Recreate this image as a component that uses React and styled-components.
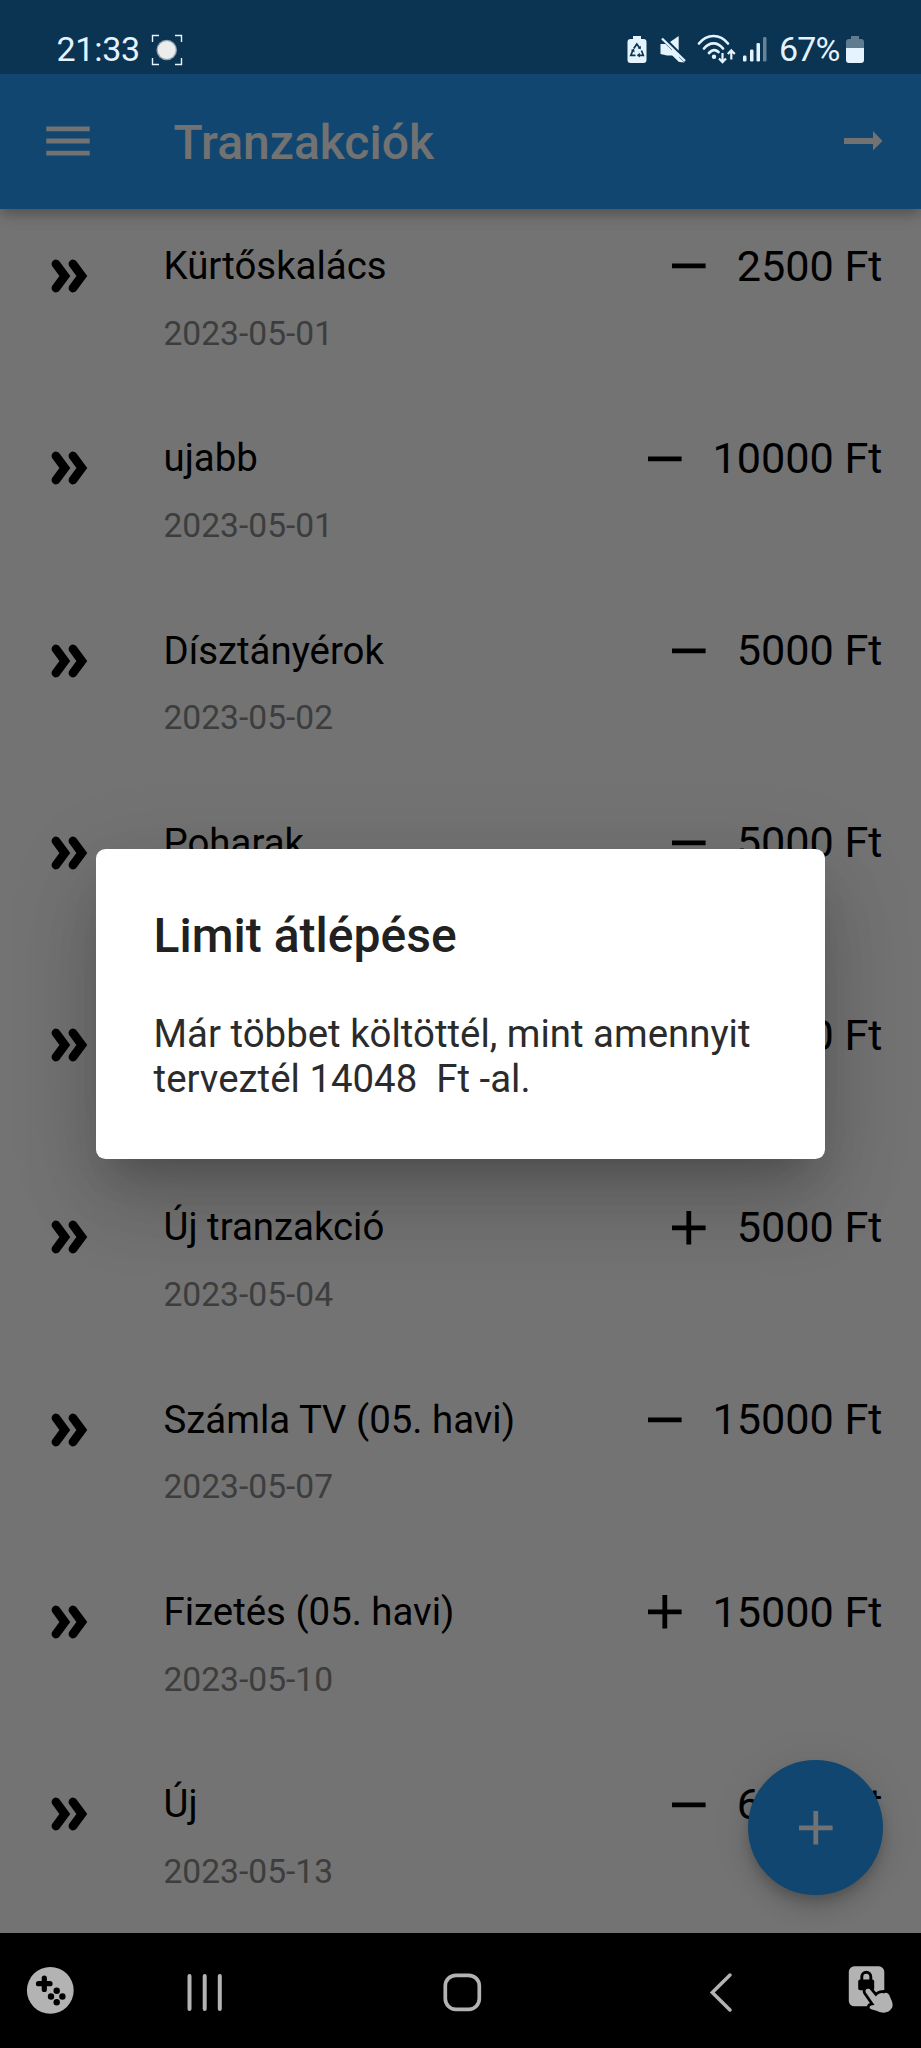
import React from "react";
import styled, { createGlobalStyle } from "styled-components";

const Global = createGlobalStyle`
  *, *::before, *::after { box-sizing: border-box; }
  body { margin: 0; background: #000; font-family: Roboto, sans-serif; }
  svg { display: block; flex: none; }
`;

const Phone = styled.div`
  width: 921px;
  height: 2048px;
  display: flex;
  flex-direction: column;
  overflow: hidden;
`;

const StatusBar = styled.header`
  height: 74px;
  flex: none;
  display: flex;
  align-items: flex-start;
  justify-content: space-between;
  padding: 34px 57px 0 56.5px;
  background: #0b3352;
  color: #e4f3fd;
  font-size: 34px;
  line-height: 30px;
`;

const StatusGroup = styled.div`
  display: flex;
  align-items: flex-start;
  height: 32px;
`;

const Clock = styled.span`
  width: 94.5px;
  letter-spacing: -0.25px;
`;

const Percent = styled.span`
  width: 67px;
  margin-left: 11px;
  letter-spacing: -0.9px;
`;

const StatusIcon = styled.svg`
  margin-left: ${(p) => p.$gap || 0}px;
`;

const Screen = styled.div`
  position: relative;
  height: 1859px;
  flex: none;
  display: flex;
  flex-direction: column;
  background: #fafafa;
  overflow: hidden;
`;

const AppBar = styled.div`
  position: relative;
  z-index: 1;
  height: 134.5px;
  flex: none;
  display: flex;
  align-items: center;
  padding: 0 38px 0 38.5px;
  background: #2498f1;
  box-shadow: 0 5px 10px -2px rgba(0, 0, 0, 0.16), 0 8px 12px rgba(0, 0, 0, 0.1),
    0 2px 22px rgba(0, 0, 0, 0.08);
`;

const AppTitle = styled.h1`
  flex: 1;
  margin: 0 0 0 77px;
  color: #f8f8f8;
  font-size: 48px;
  font-weight: 500;
  line-height: 56px;
  padding-top: 3px;
`;

const List = styled.ul`
  margin: 0;
  padding: 0;
  list-style: none;
`;

const Row = styled.li`
  height: 192.3px;
  display: grid;
  grid-template-columns: 125px 1fr auto;
  padding: 34.5px 38.5px 0;
`;

const Leading = styled.div`
  padding: 15px 0 0 11.5px;
`;

const RowTitle = styled.div`
  font-size: 38.4px;
  line-height: 46px;
  height: 70.5px;
  color: #000;
`;

const RowDate = styled.div`
  font-size: 33.6px;
  line-height: 40px;
  color: #868686;
`;

const Amount = styled.div`
  display: flex;
  align-items: center;
  height: 46px;
  gap: 19.2px;
  font-size: 43.2px;
  color: #000;
`;

const Fab = styled.button`
  position: absolute;
  right: 38.4px;
  bottom: 38.4px;
  width: 134.4px;
  height: 134.4px;
  border: 0;
  border-radius: 50%;
  display: grid;
  place-items: center;
  padding: 0;
  background: #2498f1;
  box-shadow: 0 7px 12px -2px rgba(0, 0, 0, 0.18), 0 14px 24px rgba(0, 0, 0, 0.12),
    0 2px 43px rgba(0, 0, 0, 0.08);
`;

const Scrim = styled.div`
  position: absolute;
  inset: 0;
  z-index: 2;
  display: flex;
  align-items: center;
  justify-content: center;
  background: rgba(0, 0, 0, 0.54);
`;

const Dialog = styled.section`
  width: 729px;
  height: 310px;
  padding: 58.5px 57.6px;
  border-radius: 9.6px;
  background: #fff;
  box-shadow: 0 26px 36px -17px rgba(0, 0, 0, 0.18), 0 50px 80px 0 rgba(0, 0, 0, 0.12),
    0 20px 90px 8px rgba(0, 0, 0, 0.1);
`;

const DialogTitle = styled.h2`
  margin: 0;
  color: #212121;
  font-size: 48px;
  font-weight: 500;
  line-height: 58px;
`;

const DialogText = styled.p`
  margin: 45.5px 0 0;
  color: #2b2b2b;
  font-size: 38.4px;
  line-height: 45px;
  white-space: pre;
`;

const NavBar = styled.nav`
  flex: 1;
  display: flex;
  align-items: flex-start;
  padding: 33px 25px 0 26px;
  color: #b3b3b3;
`;

const NavIcon = styled.svg`
  margin-left: ${(p) => p.$gap || 0}px;
`;

const transactions = [
  ["Kürtőskalács", "2023-05-01", "-", 2500],
  ["ujabb", "2023-05-01", "-", 10000],
  ["Dísztányérok", "2023-05-02", "-", 5000],
  ["Poharak", "2023-05-03", "-", 5000],
  ["Tányérok", "2023-05-03", "-", 5000],
  ["Új tranzakció", "2023-05-04", "+", 5000],
  ["Számla TV (05. havi)", "2023-05-07", "-", 15000],
  ["Fizetés (05. havi)", "2023-05-10", "+", 15000],
  ["Új", "2023-05-13", "-", 6000],
];

const SignIcon = ({ plus, color = "#000" }) => (
  <svg width="57.6" height="57.6" viewBox="0 0 24 24" fill={color}>
    <path d={plus ? "M19 13h-6v6h-2v-6H5v-2h6V5h2v6h6v2z" : "M19 13H5v-2h14v2z"} />
  </svg>
);

const DoubleChevron = () => (
  <svg width="40" height="36" viewBox="0 0 40 36" fill="none" stroke="#000" strokeWidth="8.8" strokeLinecap="round">
    <path d="M6 6l8.800 12-8.800 12M23 6l8.800 12-8.800 12" />
  </svg>
);

function Status() {
  return (
    <StatusBar>
      <StatusGroup>
        <Clock>21:33</Clock>
        <StatusIcon width="32" height="32" viewBox="0 0 32 32">
          <path d="M1.5 8V1.5H8M24 1.5h6.500V8M30.500 24v6.500H24M8 30.500H1.500V24" fill="none" stroke="#e4f3fd" strokeWidth="1.4" />
          <circle cx="15.700" cy="16" r="10.300" fill="#8fa0ad" />
          <circle cx="15.700" cy="16" r="9" fill="#ececec" />
        </StatusIcon>
      </StatusGroup>
      <StatusGroup>
        <StatusIcon width="20" height="30" viewBox="0 0 20 30">
          <path d="M6 2h8v3h2.500a3 3 0 0 1 3 3v18a3 3 0 0 1-3 3h-13a3 3 0 0 1-3-3V8a3 3 0 0 1 3-3H6z" fill="#e4f3fd" />
          <path d="M6.800 14.500L9.800 10l3 4.300M14.500 16.500l1.800 4.800h-4.800M8.500 21.300H3.800l2-4.800" fill="none" stroke="#0b3352" strokeWidth="1.700" />
          <path d="M13.800 11.800v3.500l-3.200-1zM12.800 18.800v4.800l-3-2.400zM3.800 16l3.300-1.300.5 3.700z" fill="#0b3352" />
        </StatusIcon>
        <StatusIcon $gap="13" width="27" height="30" viewBox="0 0 27 30">
          <path d="M.5 10h5l19 18.500-5-.5-7-6.500H7L.5 20z" fill="#e4f3fd" />
          <path d="M10 8l8.700-6v15z" fill="#e4f3fd" />
          <path d="M12 15v6l7 7v-8z" fill="#e4f3fd" />
          <path d="M4.500 4.500L25 24" stroke="#0b3352" strokeWidth="2" />
          <path d="M2 4.500l23 22.500" stroke="#e4f3fd" strokeWidth="2.400" />
        </StatusIcon>
        <StatusIcon $gap="10.500" width="39" height="31" viewBox="0 0 39 31">
          <g fill="none" stroke="#e4f3fd" strokeWidth="2.700" strokeLinecap="round">
            <path d="M2 9.500C10-.5 23-.5 31 9.500" />
            <path d="M7 14.500c5.500-6.800 13.500-6.800 19 0" />
            <path d="M12 19c3-3.500 6.500-3.800 9.500-1" />
            <path d="M25.500 19v8.500M22 24.500l3.500 3.700 3.500-3.700M34.300 25.500v-8M30.800 20l3.500-3.700 3.500 3.700" strokeWidth="2.200" strokeLinecap="butt" />
          </g>
          <circle cx="17" cy="22.800" r="2.200" fill="#e4f3fd" />
        </StatusIcon>
        <StatusIcon $gap="7" width="25" height="30" viewBox="0 0 25 30" fill="#e4f3fd">
          <rect x="0" y="21.500" width="3.500" height="6" rx="1.300" />
          <rect x="7" y="15.500" width="3.500" height="12" rx="1.300" />
          <rect x="13.500" y="9" width="3.500" height="18.500" rx="1.300" />
          <rect x="20" y="3" width="3.500" height="24.500" rx="1.300" opacity=".42" />
        </StatusIcon>
        <Percent>67%</Percent>
        <StatusIcon width="18" height="30" viewBox="0 0 18 30">
          <path d="M5 2h8v3h2a3 3 0 0 1 3 3v6H0V8a3 3 0 0 1 3-3h2z" fill="#5e7b90" />
          <path d="M0 14h18v12a3 3 0 0 1-3 3H3a3 3 0 0 1-3-3z" fill="#e4f3fd" />
        </StatusIcon>
      </StatusGroup>
    </StatusBar>
  );
}

function Navigation() {
  return (
    <NavBar>
      <NavIcon width="48" height="48" viewBox="0 0 48 48">
        <circle cx="24.300" cy="24.400" r="23.400" fill="currentColor" />
        <path d="M18.300 12v11.500M12.500 17.700H24" stroke="#000" strokeWidth="5.200" strokeLinecap="round" />
        <g fill="#000">
          <circle cx="30.700" cy="24.800" r="3.200" />
          <circle cx="25" cy="30.500" r="3.200" />
          <circle cx="36.400" cy="30.500" r="3.200" />
          <circle cx="30.700" cy="36.200" r="3.200" />
        </g>
      </NavIcon>
      <NavIcon $gap="112" width="38" height="48" viewBox="0 0 38 48" fill="none" stroke="currentColor" strokeWidth="4" strokeLinecap="round">
        <path d="M3.500 10v33M18.700 10v33M33.800 10v33" />
      </NavIcon>
      <NavIcon $gap="218" width="42" height="48" viewBox="0 0 42 48" fill="none" stroke="currentColor" strokeWidth="3.700">
        <rect x="3.300" y="9.300" width="34" height="34" rx="10.500" />
      </NavIcon>
      <NavIcon $gap="224" width="28" height="48" viewBox="0 0 28 48" fill="none" stroke="currentColor" strokeWidth="3.500" strokeLinecap="round">
        <path d="M22 9L4.300 26.500 22 44" />
      </NavIcon>
      <NavIcon $gap="111" width="48" height="48" viewBox="0 0 48 48">
        <rect x="1.800" y=".3" width="35.500" height="40" rx="5.500" fill="currentColor" />
        <rect x="11.200" y="13.500" width="16" height="10.700" rx="2" fill="#000" />
        <path d="M14.800 14v-3.200a4.500 4.500 0 0 1 9 0V14" fill="none" stroke="#000" strokeWidth="2.900" />
        <path
          d="M18.800 26.500c-1.500-3.400 3-5 4.800-2.300l5.300 6.200c3-3 5.700-4 7.600-2.800 2.500-1.800 4.800-.5 5.700 1.500 2 5.200 4.500 8 3 12.500-3.300 6.200-10 6-15 3.400l-6-1.800c-2.600-1-1.700-4 1-4l2.300-.3z"
          fill="currentColor"
          stroke="#000"
          strokeWidth="5.500"
          strokeLinejoin="round"
          paintOrder="stroke"
        />
      </NavIcon>
    </NavBar>
  );
}

export default function App() {
  return (
    <Phone>
      <Global />
      <Status />
      <Screen>
        <AppBar>
          <svg width="58" height="58" viewBox="0 0 24 24" fill="#f8f8f8">
            <path d="M3 18h18v-2H3v2zm0-5h18v-2H3v2zm0-7v2h18V6H3z" />
          </svg>
          <AppTitle>Tranzakciók</AppTitle>
          <svg width="40" height="24" viewBox="0 0 40 24" fill="#f8f8f8">
            <path d="M1 9h29V2l9.500 9.900L30 21.500V15H1z" />
          </svg>
        </AppBar>
        <List>
          {transactions.map(([name, date, sign, value], i) => (
            <Row key={i}>
              <Leading>
                <DoubleChevron />
              </Leading>
              <div>
                <RowTitle>{name}</RowTitle>
                <RowDate>{date}</RowDate>
              </div>
              <Amount>
                <SignIcon plus={sign === "+"} />
                <span>{value} Ft</span>
              </Amount>
            </Row>
          ))}
        </List>
        <Fab aria-label="Új tranzakció">
          <SignIcon plus color="#f8f8f8" />
        </Fab>
        <Scrim>
          <Dialog role="dialog">
            <DialogTitle>Limit átlépése</DialogTitle>
            <DialogText>{"Már többet költöttél, mint amennyit\nterveztél 14048  Ft -al."}</DialogText>
          </Dialog>
        </Scrim>
      </Screen>
      <Navigation />
    </Phone>
  );
}
